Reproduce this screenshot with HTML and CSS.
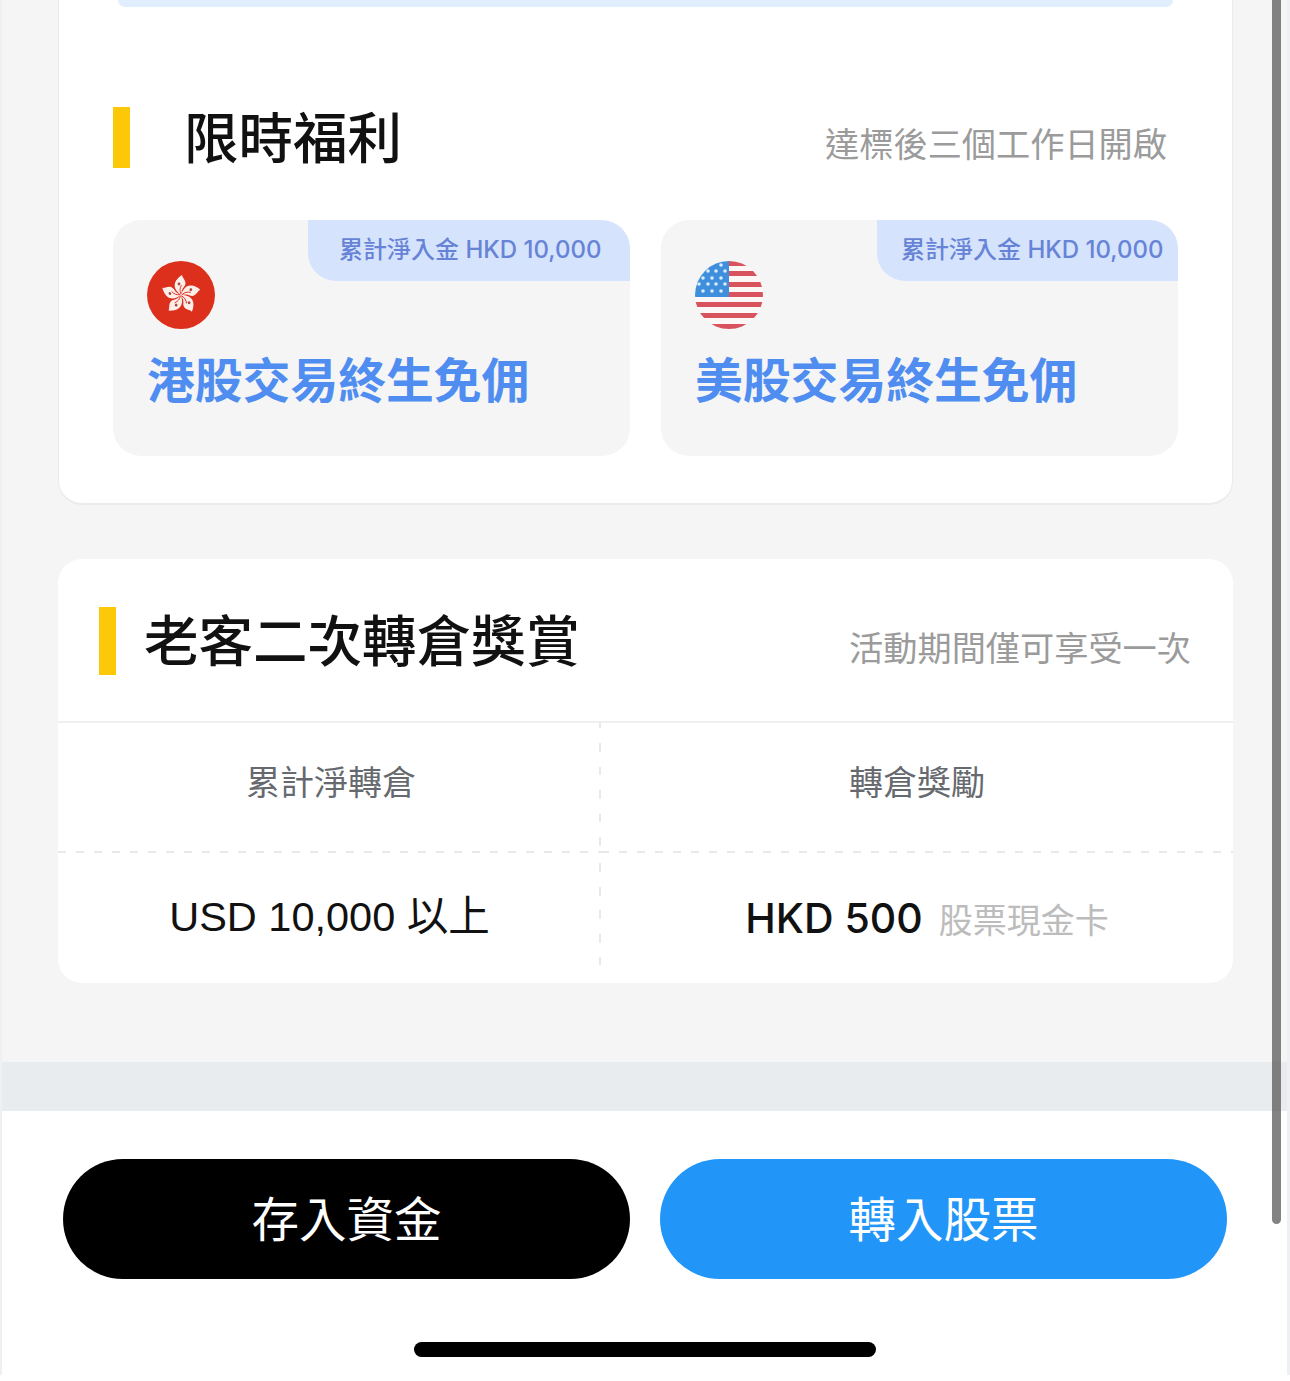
FILE: index.html
```html
<!DOCTYPE html>
<html lang="zh-Hant">
<head>
<meta charset="utf-8">
<title>限時福利</title>
<link rel="stylesheet" href="styles.css">
</head>
<body>
<div class="page">
  <main class="main">
    <section class="card card-benefit">
      <div class="top-sliver"></div>
      <header class="benefit-head">
        <span class="bar"></span>
        <h2 class="title title-benefit">限時福利</h2>
        <span class="note note-benefit">達標後三個工作日開啟</span>
      </header>
      <div class="offers">
        <article class="offer">
          <div class="tag">累計淨入金 HKD 10,000</div>
          <svg class="flag" viewBox="0 0 68 68" aria-hidden="true">
            <circle cx="34" cy="34" r="34" fill="#dc2f1c"/>
            <defs>
              <g id="petal">
                <path d="M34 34C30 31 26.500 27 28 22C29 18.500 32 16 35 14C35.500 17 38.500 19 38.500 22.500C38.500 25 36 26.500 35 29C34.500 31 34.300 32.500 34 34Z" fill="#fdeee9"/>
                <circle cx="32" cy="23" r="1.400" fill="#a8463e"/>
                <path d="M34 33C32.500 29.500 32.800 27 34.500 24" fill="none" stroke="#dc2f1c" stroke-width=".9"/>
              </g>
            </defs>
            <use href="#petal"/>
            <use href="#petal" transform="rotate(72 34 34)"/>
            <use href="#petal" transform="rotate(144 34 34)"/>
            <use href="#petal" transform="rotate(216 34 34)"/>
            <use href="#petal" transform="rotate(288 34 34)"/>
          </svg>
          <h3 class="offer-title">港股交易終生免佣</h3>
        </article>
        <article class="offer">
          <div class="tag tag-narrow">累計淨入金 HKD 10,000</div>
          <svg class="flag" viewBox="0 0 68 68" aria-hidden="true">
            <defs><clipPath id="disc"><circle cx="34" cy="34" r="34"/></clipPath></defs>
            <g clip-path="url(#disc)">
              <rect width="68" height="68" fill="#fbf7f7"/>
              <g fill="#d9535f">
                <rect x="34" y="0" width="34" height="5"/>
                <rect x="34" y="10" width="34" height="5"/>
                <rect x="34" y="21" width="34" height="5"/>
                <rect y="31" x="34" width="34" height="5"/>
                <rect y="41" width="68" height="5"/>
                <rect y="52" width="68" height="5"/>
                <rect y="63" width="68" height="5"/>
              </g>
              <rect width="34" height="36" fill="#3f8fdc"/>
              <g fill="#d8ecfb">
                <circle cx="26" cy="4" r="1.800"/>
                <circle cx="13" cy="10" r="1.800"/><circle cx="21" cy="10" r="1.800"/><circle cx="30" cy="10" r="1.800"/>
                <circle cx="8" cy="17" r="1.800"/><circle cx="17" cy="17" r="1.800"/><circle cx="26" cy="17" r="1.800"/>
                <circle cx="4" cy="23" r="1.800"/><circle cx="13" cy="23" r="1.800"/><circle cx="21" cy="23" r="1.800"/><circle cx="30" cy="23" r="1.800"/>
                <circle cx="8" cy="30" r="1.800"/><circle cx="17" cy="30" r="1.800"/><circle cx="26" cy="30" r="1.800"/>
              </g>
            </g>
          </svg>
          <h3 class="offer-title">美股交易終生免佣</h3>
        </article>
      </div>
    </section>

    <section class="card card-transfer">
      <header class="transfer-head">
        <span class="bar bar-tall"></span>
        <h2 class="title title-transfer">老客二次轉倉獎賞</h2>
        <span class="note note-transfer">活動期間僅可享受一次</span>
      </header>
      <div class="table">
        <div class="cell cell-head cell-left">累計淨轉倉</div>
        <div class="cell cell-head cell-right">轉倉獎勵</div>
        <div class="cell cell-value cell-left cell-last">USD 10,000 以上</div>
        <div class="cell cell-value cell-right cell-last"><strong class="amount">HKD 500</strong><span class="unit">股票現金卡</span></div>
      </div>
    </section>
  </main>
  <div class="band"></div>
  <footer class="footer">
    <div class="actions">
      <button class="btn btn-black" type="button">存入資金</button>
      <button class="btn btn-blue" type="button">轉入股票</button>
    </div>
    <div class="home-indicator"></div>
  </footer>
  <div class="scrollbar"></div>
</div>
</body>
</html>
```

FILE: styles.css
```css
* { box-sizing: border-box; }
html, body { margin: 0; padding: 0; height: 1381px; overflow: hidden; background: #fff; }
body { font-family: "Liberation Sans", "Noto Sans CJK TC", sans-serif; color: #111; }
h2, h3 { margin: 0; }

.page {
  position: relative;
  width: 1290px;
  height: 1375px;
  display: flex;
  flex-direction: column;
  border-left: 2px solid #eef0f4;
  border-right: 3px solid #eef0f4;
}
.main {
  height: 1062px;
  background: #f5f5f6;
  padding: 0 54px 0 56px;
  display: flex;
  flex-direction: column;
  gap: 54px;
}
.card { background: #fff; }
.card-benefit {
  height: 505px;
  flex: none;
  border-radius: 0 0 24px 24px;
  border: 1px solid #ebebec;
  border-top: 0;
  border-bottom-width: 2px;
  padding: 0 54px;
  display: flex;
  flex-direction: column;
}
.top-sliver {
  height: 7px;
  margin: 0 5px;
  background: #e0eefd;
  border-radius: 0 0 20px 20px;
}
.benefit-head {
  margin-top: 100px;
  height: 61px;
  display: flex;
  align-items: center;
}
.bar { width: 17px; height: 61px; background: #fdc807; flex: none; }
.bar-tall { height: 68px; margin-top: 2px; }
.title { font-weight: 500; color: #111; white-space: nowrap; line-height: 1; }
.title-benefit { font-size: 54.500px; margin-left: 54px; padding-top: 6px; }
.title-transfer { font-size: 54.500px; margin-left: 28px; padding-top: 6px; }
.note { margin-left: auto; font-size: 34.200px; color: #9b9b9b; line-height: 1; white-space: nowrap; }
.note-benefit { margin-right: 11px; padding-top: 16px; }
.note-transfer { margin-right: 42px; padding-top: 18px; }

.offers {
  margin-top: 52px;
  margin-right: -1px;
  display: grid;
  grid-template-columns: 517px 517px;
  column-gap: 31px;
}
.offer {
  position: relative;
  height: 236px;
  background: #f5f5f6;
  border-radius: 28px;
  padding: 41px 34px 0;
  overflow: hidden;
}
.tag {
  position: absolute;
  top: 0;
  right: 0;
  width: 322px;
  height: 61px;
  padding: 0 0 7px 31px;
  display: flex;
  align-items: center;
  background: #d5e3fd;
  color: #6783d6;
  font-family: "Inter", "Noto Sans CJK TC", sans-serif;
  font-size: 24px;
  font-weight: 500;
  border-radius: 0 28px 0 28px;
  white-space: nowrap;
}
.tag-narrow { width: 301px; padding-left: 24px; }
.flag { display: block; width: 68px; height: 68px; }
.offer-title {
  margin-top: 29px;
  font-size: 47.800px;
  font-weight: 700;
  line-height: 1;
  color: #4f8ef0;
  white-space: nowrap;
}

.card-transfer {
  height: 424px;
  flex: none;
  border-radius: 24px;
  display: flex;
  flex-direction: column;
}
.transfer-head {
  height: 164px;
  padding-left: 41px;
  display: flex;
  align-items: center;
  border-bottom: 2px solid #eeeff0;
}
.table {
  flex: 1;
  display: grid;
  grid-template-columns: 543px 1fr;
  grid-template-rows: 130px 1fr;
}
.cell { display: flex; align-items: center; justify-content: center; white-space: nowrap; background-repeat: no-repeat; }
.cell-head {
  font-size: 34px;
  color: #666a6e;
  padding-bottom: 16px;
  background-image: repeating-linear-gradient(90deg, #e8e9eb 0 8px, transparent 8px 18px);
  background-size: 100% 2px;
  background-position: left bottom;
}
.cell-head.cell-left {
  padding-left: 3px;
  background-image:
    repeating-linear-gradient(90deg, #e8e9eb 0 8px, transparent 8px 18px),
    repeating-linear-gradient(180deg, #e8e9eb 0 5px, transparent 5px 20px, #e8e9eb 20px 23.500px);
  background-size: 100% 2px, 2px 100%;
  background-position: left bottom, right top;
}
.cell-value { font-size: 41.500px; color: #111; }
.cell-left.cell-last {
  padding-bottom: 10px;
  background-image: repeating-linear-gradient(180deg, transparent 0 10px, #e8e9eb 10px 19px, transparent 19px 23.500px);
  background-size: 2px calc(100% - 18px);
  background-position: right top;
}
.cell-right.cell-last { padding-left: 20px; }
.amount { font-family: "Inter", "Liberation Sans", sans-serif; font-size: 41px; font-weight: 500; }
.unit { margin-left: 16px; font-size: 34px; color: #bcbcbc; }

.band { height: 49px; background: #e9ecef; flex: none; }
.footer { flex: 1; background: #fff; display: flex; flex-direction: column; align-items: center; }
.actions {
  margin-top: 48px;
  width: 100%;
  padding: 0 60px 0 61px;
  display: grid;
  grid-template-columns: 567px 567px;
  column-gap: 30px;
}
.btn {
  height: 120px;
  border: 0;
  border-radius: 60px;
  padding: 0 0 5px;
  color: #fff;
  font-family: inherit;
  font-size: 47.500px;
  font-weight: 400;
}
.btn-black { background: #000; }
.btn-blue { background: #2196f8; }
.home-indicator {
  margin-top: 63px;
  width: 462px;
  height: 15px;
  border-radius: 8px;
  background: #000;
}
.scrollbar {
  position: absolute;
  top: 0;
  left: 1270px;
  width: 9px;
  height: 1224px;
  border-radius: 0 0 5px 5px;
  background: rgba(90, 90, 90, .75);
}
```
